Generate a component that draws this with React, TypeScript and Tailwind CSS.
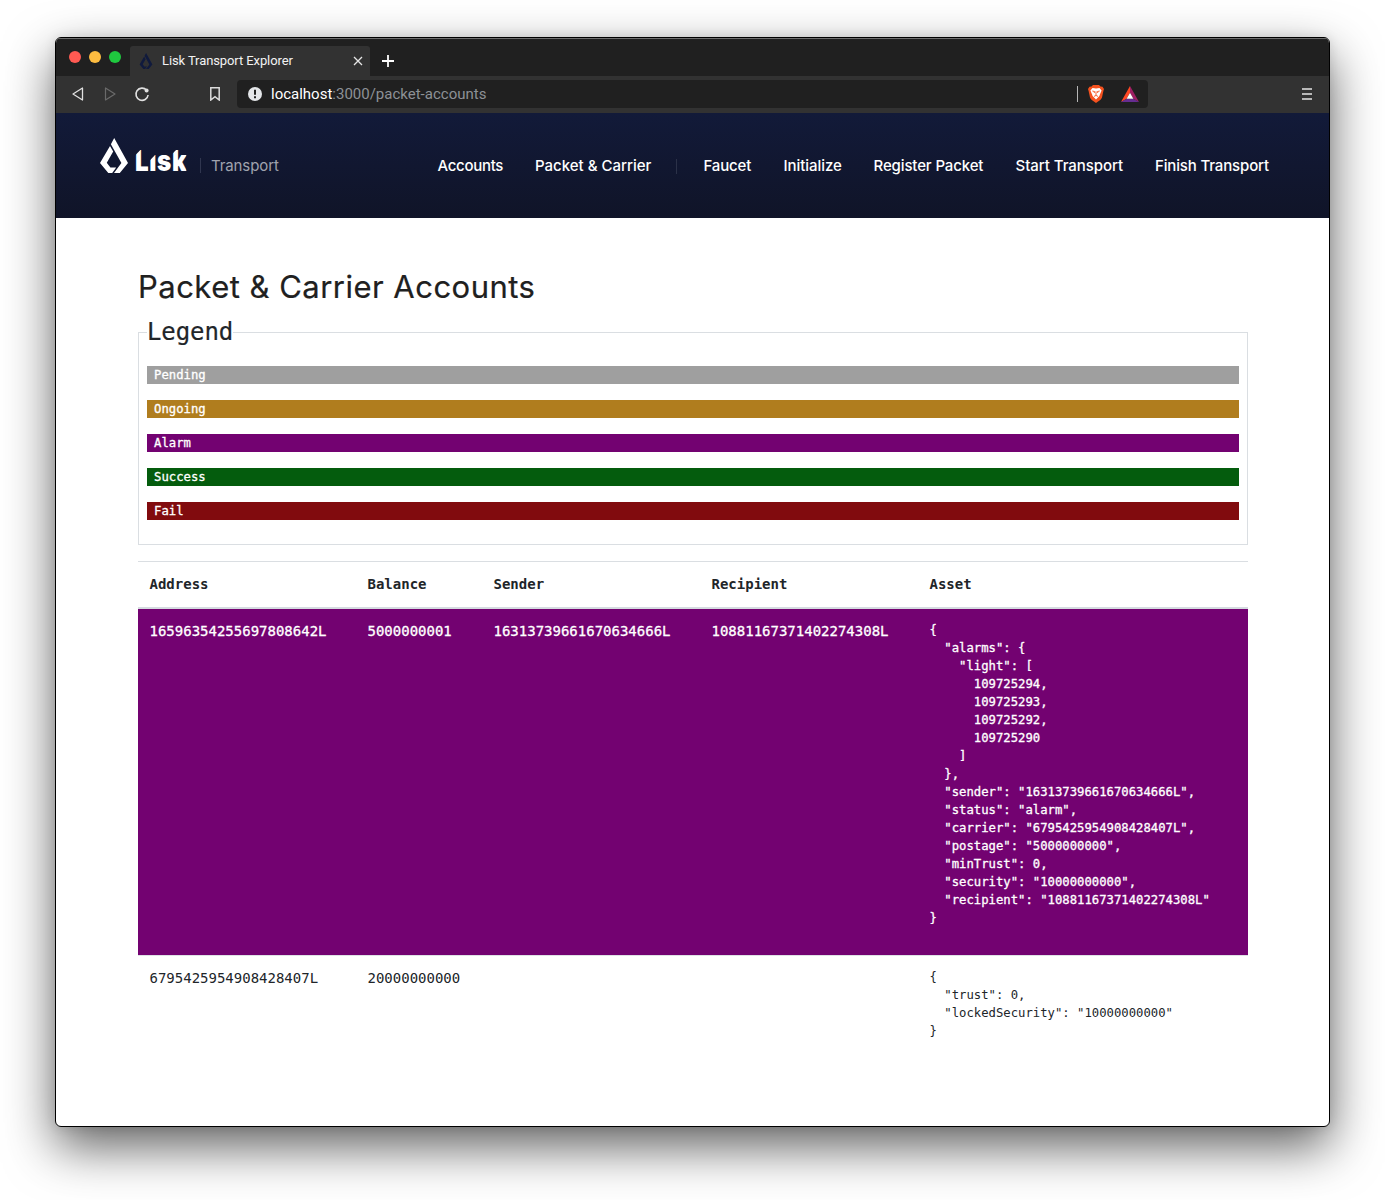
import React from "react";

const navLeft = [
  { label: "Accounts", style: "w-[65.5px] tracking-[-0.3px]" },
  { label: "Packet & Carrier", style: "w-[115.5px]" },
];

const navRight = [
  { label: "Faucet", style: "w-[48px] tracking-[-0.15px]" },
  { label: "Initialize", style: "w-[58px] tracking-[-0.05px]" },
  { label: "Register Packet", style: "w-[110px] tracking-[-0.13px]" },
  { label: "Start Transport", style: "w-[107.5px] tracking-[-0.05px]" },
  { label: "Finish Transport", style: "w-[115px] tracking-[-0.15px]" },
];

const legend = [
  { label: "Pending", color: "bg-[#9f9f9f]" },
  { label: "Ongoing", color: "bg-[#b07d1e]" },
  { label: "Alarm", color: "bg-[#730271]" },
  { label: "Success", color: "bg-[#045c0d]" },
  { label: "Fail", color: "bg-[#810b0e]" },
];

const columns = "grid grid-cols-[218px_126px_218px_218px_1fr]";

const packetAsset = {
  alarms: { light: [109725294, 109725293, 109725292, 109725290] },
  sender: "16313739661670634666L",
  status: "alarm",
  carrier: "6795425954908428407L",
  postage: "5000000000",
  minTrust: 0,
  security: "10000000000",
  recipient: "10881167371402274308L",
};

const carrierAsset = { trust: 0, lockedSecurity: "10000000000" };

function LiskMark({ className }: { className: string }) {
  return (
    <svg viewBox="0 0 28 35" className={className} fill="currentColor">
      <path d="M14.2 0 L28 24.9 L19.8 35 H14 L21.4 24.9 L10.9 6.2 Z" />
      <path d="M10 7.9 L13.2 13.6 L6.8 24.8 L10.4 29.6 H16.2 L12.2 35 H8.3 L0 24.9 Z" />
    </svg>
  );
}

function BrowserChrome() {
  return (
    <div className="font-[Roboto,sans-serif]">
      <div className="flex h-[38px] items-end bg-[#202020] shadow-[inset_0_1px_0_#6e6e6e]">
        <div className="flex h-full w-[74px] items-center gap-2 pl-[13px]">
          <span className="size-3 rounded-full bg-[#ff5a52]" />
          <span className="size-3 rounded-full bg-[#fdbc40]" />
          <span className="size-3 rounded-full bg-[#1fc93f]" />
        </div>
        <div className="flex h-[30px] w-[240px] items-center rounded-t-[3px] bg-[#323232] pl-[9px]">
          <LiskMark className="h-4 w-[14px] text-[#101a3d]" />
          <span className="ml-[9px] w-[184px] text-[13px] leading-4 tracking-[-0.1px] whitespace-nowrap text-[#f2f2f2]">
            Lisk Transport Explorer
          </span>
          <svg viewBox="0 0 10 10" className="ml-[7px] size-[10px]" stroke="#e6e6e6" strokeWidth="1.3">
            <path d="M1 1 L9 9 M9 1 L1 9" />
          </svg>
        </div>
        <svg viewBox="0 0 12 12" className="mb-[9px] ml-3 size-3" stroke="#fff" strokeWidth="1.8">
          <path d="M6 0 V12 M0 6 H12" />
        </svg>
      </div>
      <div className="flex h-[37px] items-center bg-[#323232] pb-px">
        <svg viewBox="0 0 12 14" className="ml-4 h-[14px] w-3" fill="none" stroke="#e0e0e0" strokeWidth="1.3" strokeLinejoin="round">
          <path d="M10.5 1 V13 L1 7 Z" />
        </svg>
        <svg viewBox="0 0 12 14" className="ml-5 h-[14px] w-3" fill="none" stroke="#6a6a6a" strokeWidth="1.2" strokeLinejoin="round">
          <path d="M1.5 1 V13 L11 7 Z" />
        </svg>
        <svg viewBox="0 0 16 16" className="ml-[18px] size-4" fill="none" stroke="#e0e0e0" strokeWidth="1.6">
          <path d="M12.6 4.2 A6.1 6.1 0 1 0 14.1 9" />
          <circle cx="12.6" cy="4.6" r="2" fill="#e0e0e0" stroke="none" />
        </svg>
        <svg viewBox="0 0 10 14" className="ml-[60px] h-[14px] w-[10px]" fill="none" stroke="#dcdcdc" strokeWidth="1.5">
          <path d="M0.8 0.8 H9.2 V13 L5 9.6 L0.8 13 Z" />
        </svg>
        <div className="ml-[17px] flex h-7 w-[911px] items-center rounded bg-[#202020]">
          <svg viewBox="0 0 14 14" className="ml-[11px] size-[14px]">
            <circle cx="7" cy="7" r="7" fill="#e4e6e9" />
            <path d="M7 2.8 V7.8 M7 9.2 V11.2" stroke="#202020" strokeWidth="2" />
          </svg>
          <div className="ml-[9px] w-[797px] text-[15px] leading-5 whitespace-nowrap text-[#8d9196]">
            <span className="text-white">localhost</span>:3000/packet-accounts
          </div>
          <span className="ml-[9px] h-4 w-px bg-[#b5b5b5]" />
          <svg viewBox="0 0 16 18" className="ml-[10px] h-[18px] w-4">
            <path d="M5 0 H11 L12.5 1.6 L14.5 1.8 L16 4 L15.4 6 L14 12.5 Q13.5 14.5 8 18 Q2.5 14.5 2 12.5 L0.6 6 L0 4 L1.5 1.8 L3.5 1.6 Z" fill="#f4511e" />
            <path d="M4.5 3 L8 3.4 L11.5 3 L13.6 5.6 L12 9.2 L11.4 11 L8 14.6 L4.6 11 L4 9.2 L2.4 5.6 Z" fill="#fff" />
            <path d="M4.3 6 L6.7 6.6 L6.1 8 M11.7 6 L9.3 6.6 L9.9 8 M8 6.5 V10 M6 11.4 L8 10.4 L10 11.4" stroke="#f4511e" strokeWidth="0.9" fill="none" />
          </svg>
          <svg viewBox="0 0 18 16" className="ml-[17px] h-4 w-[18px]">
            <path d="M9 0 L0 16 L5.6 12.7 L9 6.8 Z" fill="#ff4724" />
            <path d="M9 0 L18 16 L12.4 12.7 L9 6.8 Z" fill="#9e1f63" />
            <path d="M0 16 H18 L12.4 12.7 H5.6 Z" fill="#662d91" />
            <path d="M9 6.8 L12.4 12.7 H5.6 Z" fill="#fff" />
          </svg>
        </div>
        <div className="ml-[154px] flex flex-col gap-[3px]">
          <span className="h-0.5 w-[10px] bg-[#b8b8b8]" />
          <span className="h-0.5 w-[10px] bg-[#b8b8b8]" />
          <span className="h-0.5 w-[10px] bg-[#b8b8b8]" />
        </div>
      </div>
    </div>
  );
}

function SiteHeader() {
  return (
    <header className="flex h-[105px] items-start bg-linear-to-b from-[#121a39] to-[#101428] font-[Inter,sans-serif] text-[15px] leading-6 font-medium text-white">
      <div className="flex w-[381.5px] shrink-0 pl-11">
        <LiskMark className="mt-[25px] h-[35px] w-7" />
        <div className="mt-[31px] ml-[7px] w-[52px]">
          <div className="flex w-max origin-left scale-x-[0.85] gap-[0.7px] text-[28.5px] leading-[34px] font-black">
            <span className="[clip-path:polygon(0_34%,48%_14%,100%_14%,100%_100%,0_100%)]">L</span>
            <span className="[clip-path:polygon(0_50%,80%_32%,100%_32%,100%_100%,0_100%)]">ı</span>
            <span>s</span>
            <span className="[clip-path:polygon(0_30%,45%_10%,100%_10%,100%_100%,0_100%)]">k</span>
          </div>
        </div>
        <span className="mt-[45px] ml-[13px] h-[15px] w-px bg-[#30364f]" />
        <span className="mt-[41px] ml-[10px] font-normal tracking-[-0.1px] text-[#a0a3ae]">Transport</span>
      </div>
      <nav className="mt-[41px] flex items-center whitespace-nowrap">
        <div className="flex gap-8">
          {navLeft.map((item) => (
            <a key={item.label} className={item.style}>{item.label}</a>
          ))}
        </div>
        <span className="mr-[26.5px] ml-[25.5px] h-[15px] w-px bg-[#2b3148]" />
        <div className="flex gap-8">
          {navRight.map((item) => (
            <a key={item.label} className={item.style}>{item.label}</a>
          ))}
        </div>
      </nav>
    </header>
  );
}

function Asset({ value }: { value: object }) {
  return <pre className="font-[inherit] text-[12.25px] leading-[18px]">{JSON.stringify(value, null, 2)}</pre>;
}

function AccountsTable() {
  return (
    <div className="mt-4 border-t border-[#dadee2] text-[14px] leading-[21px]">
      <div className={`${columns} h-[47px] border-b-2 border-[#d5dbe0] pt-3 pl-[11.5px] font-bold`}>
        <span>Address</span>
        <span>Balance</span>
        <span>Sender</span>
        <span>Recipient</span>
        <span>Asset</span>
      </div>
      <div className={`${columns} h-[346px] bg-[#730271] pt-3 pl-[11.5px] text-white [-webkit-text-stroke:0.3px_white]`}>
        <span>16596354255697808642L</span>
        <span>5000000001</span>
        <span>16313739661670634666L</span>
        <span>10881167371402274308L</span>
        <Asset value={packetAsset} />
      </div>
      <div className={`${columns} border-t border-[#dee2e6] pt-3 pl-[11.5px]`}>
        <span>6795425954908428407L</span>
        <span>20000000000</span>
        <span />
        <span />
        <Asset value={carrierAsset} />
      </div>
    </div>
  );
}

export default function App() {
  return (
    <div className="h-[1200px] w-[1385px] overflow-hidden bg-white pt-[37px] pl-[55px]">
      <div className="h-[1090px] w-[1275px] overflow-hidden rounded-[6px] border border-black bg-white shadow-[0_20px_50px_rgba(0,0,0,0.62),0_0_12px_rgba(0,0,0,0.1)]">
        <BrowserChrome />
        <SiteHeader />
        <main className="mr-[81px] ml-[82px] pt-[49px] font-['DejaVu_Sans_Mono',monospace] text-[#212529]">
          <h1 className="h-[48px] font-[Inter,sans-serif] text-[31px] leading-10 tracking-[0.48px] whitespace-nowrap text-[#202020] [-webkit-text-stroke:0.2px_#202020]">
            Packet &amp; Carrier Accounts
          </h1>
          <fieldset className="h-[230px] border border-[#dadee2] px-2">
            <legend className="h-[35px] text-[24px] leading-[34px] tracking-[-0.1px] [-webkit-text-stroke:0.2px_#212529]">Legend</legend>
            <div className="mt-4 flex flex-col gap-4">
              {legend.map((item) => (
                <div key={item.label} className={`${item.color} h-[18px] pl-[7px] text-[12.25px] leading-[18px] text-white [-webkit-text-stroke:0.3px_white]`}>
                  {item.label}
                </div>
              ))}
            </div>
          </fieldset>
          <AccountsTable />
        </main>
      </div>
    </div>
  );
}
